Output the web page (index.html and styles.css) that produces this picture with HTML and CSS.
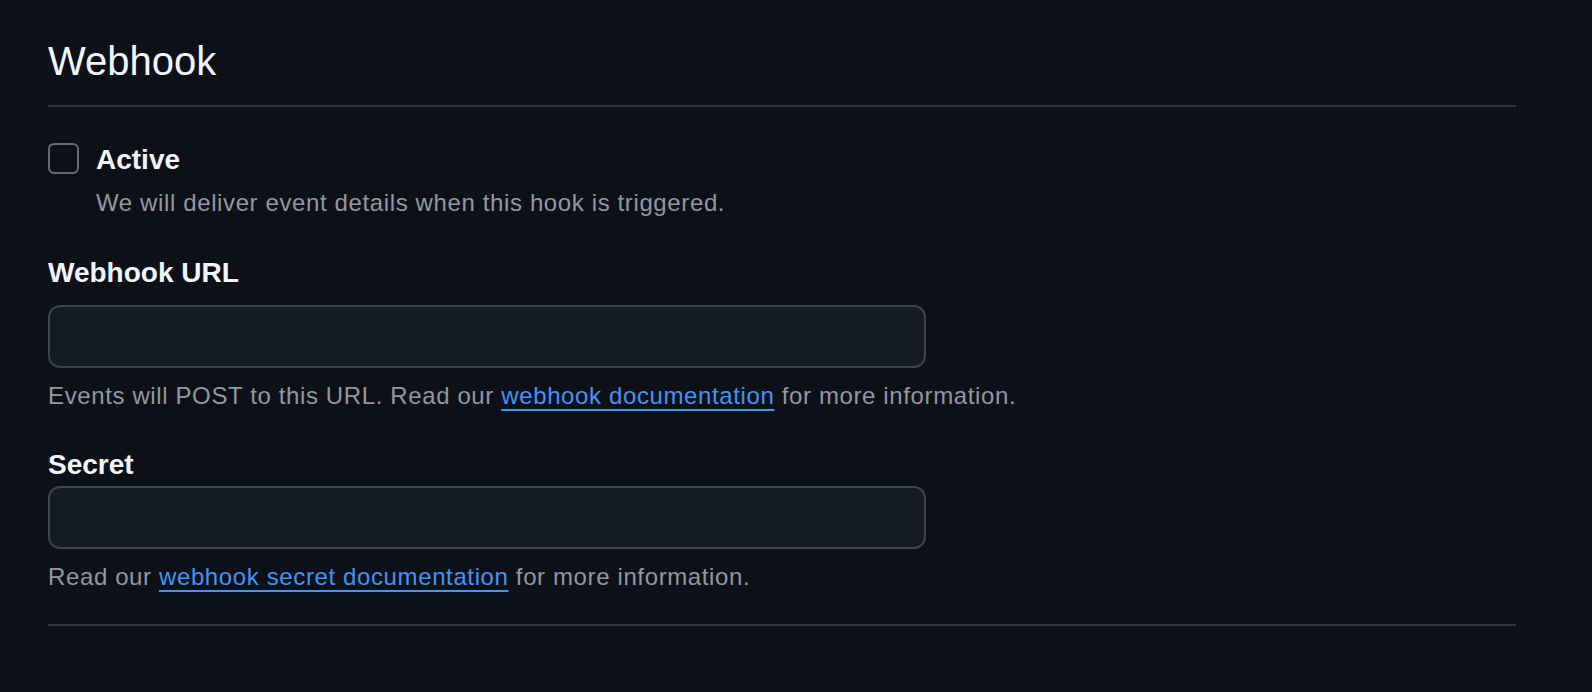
FILE: index.html
```html
<!DOCTYPE html>
<html lang="en">
<head>
<meta charset="utf-8">
<title>Webhook</title>
<link rel="stylesheet" href="styles.css">
</head>
<body>
<main class="page">
  <header class="subhead">
    <h2 class="subhead-heading">Webhook</h2>
  </header>
  <div class="check-group">
    <span class="checkbox"></span>
    <div class="check-text">
      <div class="check-label">Active</div>
      <p class="note">We will deliver event details when this hook is triggered.</p>
    </div>
  </div>
  <div class="field field-url">
    <label class="field-label">Webhook URL</label>
    <div class="input input-url"></div>
    <p class="help help-url">Events will POST to this URL. Read our <a class="link" href="#">webhook documentation</a> for more information.</p>
  </div>
  <div class="field field-secret">
    <label class="field-label">Secret</label>
    <div class="input input-secret"></div>
    <p class="help help-secret">Read our <a class="link" href="#">webhook secret documentation</a> for more information.</p>
  </div>
  <div class="bottom-rule"></div>
</main>
</body>
</html>
```

FILE: styles.css
```css
html, body {
  margin: 0;
  padding: 0;
  background: #0d1117;
}
body {
  font-family: "Liberation Sans", Arial, sans-serif;
  color: #f0f6fc;
}
.page {
  width: 1468px;
  padding: 36px 0 0 48px;
}
.subhead {
  padding-bottom: 19px;
  border-bottom: 2px solid #30363d;
}
.subhead-heading {
  margin: 0;
  font-size: 40px;
  line-height: 50px;
  font-weight: 400;
  color: #f0f6fc;
}
.check-group {
  display: flex;
  margin-top: 33px;
}
.checkbox {
  flex: none;
  width: 31px;
  height: 31px;
  box-sizing: border-box;
  border: 2px solid #656c76;
  border-radius: 6px;
  margin-top: 3px;
  margin-right: 17px;
}
.check-label {
  font-size: 28px;
  line-height: 40px;
  font-weight: 700;
}
.note, .help {
  margin: 0;
  font-size: 24px;
  line-height: 36px;
  letter-spacing: 0.62px;
  color: #9198a1;
}
.note {
  margin-top: 5px;
}
.field-url {
  margin-top: 32px;
}
.field-secret {
  margin-top: 31px;
}
.field-label {
  display: block;
  font-size: 28px;
  line-height: 40px;
  font-weight: 700;
}
.input {
  width: 878px;
  height: 63px;
  box-sizing: border-box;
  background: #151b23;
  border: 2px solid #3d444d;
  border-radius: 12px;
}
.input-url {
  margin-top: 12px;
}
.input-secret {
  margin-top: 1px;
}
.help-url {
  margin-top: 10px;
}
.help-secret {
  margin-top: 10px;
}
.link {
  color: #4493f8;
  text-decoration: underline;
  text-decoration-thickness: 2px;
  text-underline-offset: 5px;
}
.bottom-rule {
  margin-top: 29px;
  height: 2px;
  background: #30363d;
}
```
